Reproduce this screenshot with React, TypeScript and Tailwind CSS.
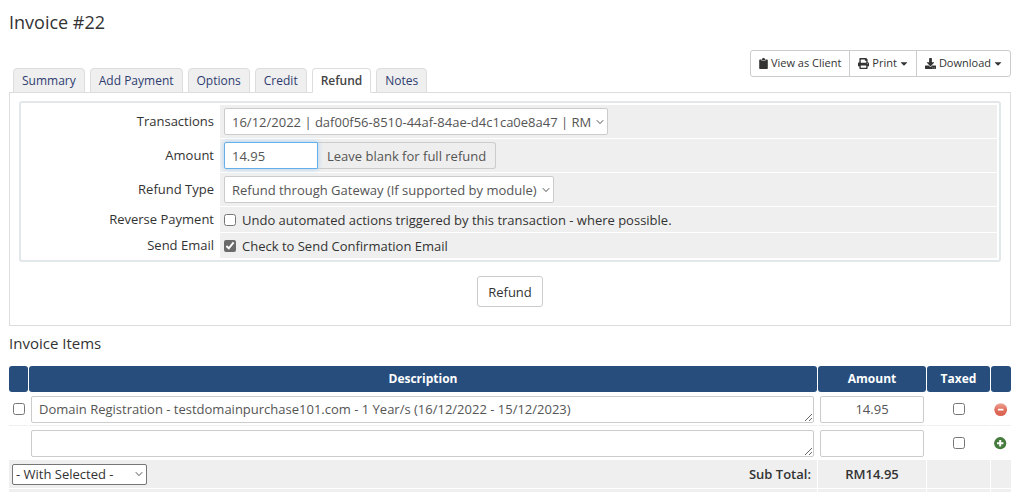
import { useState } from "react";
import type { ReactNode } from "react";
import { FaCaretDown, FaDownload, FaPrint } from "react-icons/fa";

const TABS = ["Summary", "Add Payment", "Options", "Credit", "Refund", "Notes"];

function Chevron() {
  return (
    <svg
      viewBox="0 0 8 6"
      className="pointer-events-none absolute top-1/2 right-1 h-[6px] w-2 -translate-y-1/2"
      fill="none"
      stroke="#555"
      aria-hidden="true"
    >
      <path d="M0.8 1.2 4 4.6 7.2 1.2" />
    </svg>
  );
}

function FieldRow({ label, htmlFor, children }: { label: string; htmlFor: string; children: ReactNode }) {
  return (
    <div className="flex">
      <label htmlFor={htmlFor} className="flex w-[197px] shrink-0 items-center justify-end pr-[6px] pb-px">
        {label}
      </label>
      <div className="flex min-h-[25px] flex-1 items-center bg-[#efefef] px-1 py-[3px]">{children}</div>
    </div>
  );
}

function ClipboardIcon() {
  return (
    <svg viewBox="0 0 9 11" className="h-[11px] w-[9px]" fill="currentColor" aria-hidden="true">
      <path d="M1.2 1.4h1.5v1.7h3.6V1.4h1.5c.6 0 1 .4 1 1V10c0 .6-.4 1-1 1H1.2c-.6 0-1-.4-1-1V2.400c0-.6.4-1 1-1Z" />
      <path d="M3 1.300a1.500 1.300 0 0 1 3 0v1.300H3Z" />
    </svg>
  );
}

function RemoveIcon() {
  return (
    <svg viewBox="0 0 14 14" className="size-[14px]" aria-hidden="true">
      <defs>
        <linearGradient id="remove-fill" x1="0" y1="0" x2="0" y2="1">
          <stop offset="0" stopColor="#efa594" />
          <stop offset="0.5" stopColor="#e0705f" />
          <stop offset="1" stopColor="#d9604e" />
        </linearGradient>
      </defs>
      <circle cx="6.7" cy="7.6" r="6.4" fill="url(#remove-fill)" />
      <rect x="3.9" y="6.7" width="5.6" height="1.9" rx="0.4" fill="#fff" />
    </svg>
  );
}

function AddIcon() {
  return (
    <svg viewBox="0 0 14 14" className="size-[14px]" aria-hidden="true">
      <circle cx="6.2" cy="7.2" r="6.1" fill="#457b3c" />
      <path d="M6.2 4v6.4M3 7.200h6.4" stroke="#fff" strokeWidth="2" />
    </svg>
  );
}

export default function App() {
  const [activeTab, setActiveTab] = useState("Refund");
  const toolButton = "flex items-center gap-[3px] px-2 pb-px text-[11px] hover:bg-gray-50";
  const itemField = "block h-[27px] w-full rounded-xs border border-[#ccc] bg-white text-[13px] text-[#555]";
  const itemText = "mx-[2px] max-w-[calc(100%-5px)] overflow-hidden px-[7px] py-[3px]";

  return (
    <div className="bg-white px-[9px] pr-[13px] font-['Open_Sans','Liberation_Sans',sans-serif] text-[13px] leading-[18px] text-[#333]">
      <h1 className="pt-[10px] text-[18px] leading-6">Invoice #22</h1>

      {/* Tabs and invoice actions */}
      <div className="mt-4 flex items-start justify-between">
        <div role="tablist" className="z-10 mt-[18px] -mb-px flex gap-[5px] pl-1">
          {TABS.map((tab) => (
            <button
              key={tab}
              type="button"
              role="tab"
              aria-selected={tab === activeTab}
              onClick={() => setActiveTab(tab)}
              className={`h-[25px] rounded-t border px-2 text-[12px] leading-4 ${
                tab === activeTab
                  ? "border-[#ddd] border-b-white bg-white font-semibold text-[#444]"
                  : "border-[#ddd] bg-[#efefef] text-[#2e3c70]"
              }`}
            >
              {tab}
            </button>
          ))}
        </div>
        <div className="flex h-[27px] divide-x divide-[#ccc] rounded-[3px] border border-[#ccc]">
          <button type="button" className={toolButton}>
            <ClipboardIcon />
            View as Client
          </button>
          <button type="button" className={toolButton}>
            <FaPrint />
            Print
            <FaCaretDown className="w-2" />
          </button>
          <button type="button" className={toolButton}>
            <FaDownload />
            Download
            <FaCaretDown className="w-2" />
          </button>
        </div>
      </div>

      {/* Refund form */}
      <form className="border border-[#ddd] px-[9px] pt-2 pb-[18px]" onSubmit={(e) => e.preventDefault()}>
        <div className="flex flex-col gap-px rounded-[3px] border-2 border-[#e2e7e9] p-[2px]">
          <FieldRow label="Transactions" htmlFor="transaction">
            <div className="relative">
              <select
                id="transaction"
                className="block h-[27px] w-[384px] appearance-none rounded-xs border border-[#ccc] bg-white pr-3 pl-[7px] text-[#555]"
              >
                <option>16/12/2022 | daf00f56-8510-44af-84ae-d4c1ca0e8a47 | RM</option>
              </select>
              <Chevron />
            </div>
          </FieldRow>
          <FieldRow label="Amount" htmlFor="amount">
            <input
              id="amount"
              type="text"
              defaultValue="14.95"
              className="z-10 h-[27px] w-[94px] rounded-l-xs border border-[#66afe9] bg-white px-[7px] text-[#555] shadow-[0_0_5px_#a5cdf0] outline-none"
            />
            <span className="flex h-[27px] items-center rounded-r-[3px] border border-l-0 border-[#ccc] bg-[#eee] px-[9px] text-[#555]">
              Leave blank for full refund
            </span>
          </FieldRow>
          <FieldRow label="Refund Type" htmlFor="refund-type">
            <div className="relative">
              <select
                id="refund-type"
                className="block h-[27px] w-[330px] appearance-none rounded-xs border border-[#ccc] bg-white pr-3 pl-[7px] text-[#555]"
              >
                <option>Refund through Gateway (If supported by module)</option>
              </select>
              <Chevron />
            </div>
          </FieldRow>
          <FieldRow label="Reverse Payment" htmlFor="reverse-payment">
            <input id="reverse-payment" type="checkbox" className="mr-[6px] size-3" />
            <label htmlFor="reverse-payment">
              Undo automated actions triggered by this transaction - where possible.
            </label>
          </FieldRow>
          <FieldRow label="Send Email" htmlFor="send-email">
            <input id="send-email" type="checkbox" defaultChecked className="mr-[6px] size-3 accent-[#6b6b6b]" />
            <label htmlFor="send-email">Check to Send Confirmation Email</label>
          </FieldRow>
        </div>
        <div className="mt-[14px] text-center">
          <button type="submit" className="h-[31px] rounded-[3px] border border-[#ccc] bg-white px-[10px]">
            Refund
          </button>
        </div>
      </form>

      {/* Invoice items */}
      <h2 className="mt-[7px] mb-3 text-[15px] leading-5">Invoice Items</h2>
      <table className="-mx-px w-[calc(100%+2px)] table-fixed border-separate border-spacing-px text-center">
        <thead>
          <tr className="h-[26px] text-[12px] text-white *:rounded-[3px] *:bg-[#274d7c] *:p-0">
            <th className="w-[19px]" aria-label="Select" />
            <th>Description</th>
            <th className="w-[108px]">Amount</th>
            <th className="w-[63px]">Taxed</th>
            <th className="w-5" aria-label="Actions" />
          </tr>
        </thead>
        <tbody>
          <tr className="h-[33px] *:border-b *:border-[#efefef] *:p-0">
            <td>
              <input type="checkbox" aria-label="Select item" className="mx-auto block size-3" />
            </td>
            <td>
              <textarea
                aria-label="Description"
                defaultValue="Domain Registration - testdomainpurchase101.com - 1 Year/s (16/12/2022 - 15/12/2023)"
                className={`${itemField} ${itemText}`}
              />
            </td>
            <td className="!px-[2px]">
              <input type="text" aria-label="Amount" defaultValue="14.95" className={`${itemField} text-center`} />
            </td>
            <td>
              <input type="checkbox" aria-label="Taxed" className="mx-auto block size-3" />
            </td>
            <td>
              <button type="button" aria-label="Remove item" className="mx-auto block">
                <RemoveIcon />
              </button>
            </td>
          </tr>
          <tr className="h-8 *:p-0">
            <td />
            <td>
              <textarea aria-label="New description" className={`${itemField} ${itemText}`} />
            </td>
            <td className="!px-[2px]">
              <input type="text" aria-label="New amount" className={`${itemField} text-center`} />
            </td>
            <td>
              <input type="checkbox" aria-label="New item taxed" className="mx-auto block size-3" />
            </td>
            <td>
              <button type="button" aria-label="Add item" className="mx-auto block">
                <AddIcon />
              </button>
            </td>
          </tr>
          <tr className="h-7 font-semibold *:bg-[#efefef] *:p-0">
            <td colSpan={2}>
              <div className="flex items-center justify-between pr-[6px] pl-[3px]">
                <div className="relative font-normal">
                  <select
                    aria-label="With selected"
                    className="block h-[21px] w-[135px] appearance-none rounded-xs border border-[#767676] bg-white px-[3px]"
                  >
                    <option>- With Selected -</option>
                  </select>
                  <Chevron />
                </div>
                <span>Sub Total:</span>
              </div>
            </td>
            <td>RM14.95</td>
            <td />
            <td />
          </tr>
          <tr className="h-[3px] *:bg-[#efefef] *:p-0">
            <td colSpan={2} />
            <td />
            <td />
            <td />
          </tr>
        </tbody>
      </table>
    </div>
  );
}
